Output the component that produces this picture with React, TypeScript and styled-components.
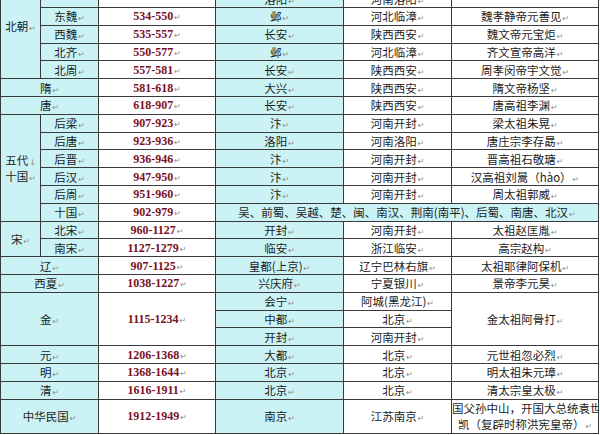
import React from "react";
import styled, { createGlobalStyle } from "styled-components";

const GlobalStyle = createGlobalStyle`
  html, body {
    margin: 0;
    padding: 0;
    background: #fff;
  }
  body {
    font-family: "Noto Sans CJK SC", "Liberation Sans", sans-serif;
  }
`;

type Tone = "sky" | "plain";

type Entry = {
  name: string;
  years: string;
  capital: React.ReactNode;
  place: React.ReactNode;
  founder: React.ReactNode;
};

const Viewport = styled.div`
  width: 600px;
  height: 435px;
  overflow: hidden;
`;

// the first row (北魏) sits above the top edge of the shot
const Table = styled.table`
  margin-top: -27px;
  width: 598px;
  border-collapse: collapse;
  table-layout: fixed;
  color: #1c1c1c;
  font-size: 11.5px;
  line-height: 14px;
`;

const Row = styled.tr<{ $h?: number }>`
  height: ${(p) => p.$h ?? 17.8}px;
`;

const Cell = styled.td<{ $tone?: Tone }>`
  border: 1px solid #3a3a3a;
  background: ${(p) => (p.$tone === "sky" ? "#cbf3f6" : "#ffffff")};
  text-align: center;
  vertical-align: middle;
  padding: 0 1px;
  white-space: nowrap;
  overflow: hidden;
  line-height: 14px;
`;

const Years = styled(Cell)`
  font-family: "Liberation Serif", serif;
  font-weight: bold;
  font-size: 12px;
  color: #7a1024;
`;

const Founder = styled(Cell)`
  padding: 0;
`;

const TwoLine = styled(Cell)`
  padding: 0;
  line-height: 16px;
`;

const Mark = styled.span`
  font-family: "DejaVu Sans", sans-serif;
  font-size: 8px;
  line-height: 0;
  font-weight: normal;
  color: #8c8c8c;
  margin-left: 1px;
`;

const Spell = styled.span`
  text-decoration: underline wavy #d23a3a;
  text-underline-offset: 2px;
`;

const t = (s: React.ReactNode, mark = "↵") => (
  <>
    {s}
    <Mark>{mark}</Mark>
  </>
);

const north: Entry[] = [
  { name: "东魏", years: "534-550", capital: "邺", place: "河北临漳", founder: "魏孝静帝元善见" },
  { name: "西魏", years: "535-557", capital: "长安", place: "陕西西安", founder: "魏文帝元宝炬" },
  { name: "北齐", years: "550-577", capital: "邺", place: "河北临漳", founder: "齐文宣帝高洋" },
  { name: "北周", years: "557-581", capital: "长安", place: "陕西西安", founder: "周孝闵帝宇文觉" },
];

const fiveDynasties: Entry[] = [
  { name: "后梁", years: "907-923", capital: "汴", place: "河南开封", founder: "梁太祖朱晃" },
  { name: "后唐", years: "923-936", capital: "洛阳", place: "河南洛阳", founder: "唐庄宗李存勗" },
  { name: "后晋", years: "936-946", capital: "汴", place: "河南开封", founder: "晋高祖石敬瑭" },
  {
    name: "后汉",
    years: "947-950",
    capital: "汴",
    place: "河南开封",
    founder: (
      <>
        汉高祖刘暠（<Spell>hào</Spell>）
      </>
    ),
  },
  { name: "后周", years: "951-960", capital: "汴", place: "河南开封", founder: "周太祖郭威" },
];

const song: Entry[] = [
  { name: "北宋", years: "960-1127", capital: "开封", place: "河南开封", founder: "太祖赵匡胤" },
  { name: "南宋", years: "1127-1279", capital: "临安", place: "浙江临安", founder: "高宗赵构" },
];

const singles1: Entry[] = [
  { name: "辽", years: "907-1125", capital: "皇都(上京)", place: "辽宁巴林右旗", founder: "太祖耶律阿保机" },
  { name: "西夏", years: "1038-1227", capital: "兴庆府", place: "宁夏银川", founder: "景帝李元昊" },
];

const singles2: Entry[] = [
  { name: "元", years: "1206-1368", capital: "大都", place: "北京", founder: "元世祖忽必烈" },
  { name: "明", years: "1368-1644", capital: "北京", place: "北京", founder: "明太祖朱元璋" },
  { name: "清", years: "1616-1911", capital: "北京", place: "北京", founder: "清太宗皇太极" },
];

const Tail = ({ e }: { e: Entry }) => (
  <>
    <Years>{t(e.years)}</Years>
    <Cell $tone="sky">{t(e.capital)}</Cell>
    <Cell>{t(e.place)}</Cell>
    <Founder>{t(e.founder)}</Founder>
  </>
);

const SingleRow = ({ e }: { e: Entry }) => (
  <Row>
    <Cell $tone="sky" colSpan={2}>
      {t(e.name)}
    </Cell>
    <Tail e={e} />
  </Row>
);

const App = () => {
  return (
    <>
      <GlobalStyle />
      <Viewport>
        <Table>
          <colgroup>
            <col style={{ width: 40 }} />
            <col style={{ width: 58 }} />
            <col style={{ width: 117 }} />
            <col style={{ width: 128 }} />
            <col style={{ width: 108 }} />
            <col style={{ width: 147 }} />
          </colgroup>
          <tbody>
            <Row $h={34}>
              <Cell $tone="sky" rowSpan={5}>
                {t("北朝")}
              </Cell>
              <Cell $tone="sky">{t("北魏")}</Cell>
              <Years>{t("386-534")}</Years>
              <TwoLine $tone="sky">
                {t("平城")}
                <br />
                {t("洛阳")}
              </TwoLine>
              <TwoLine>
                {t("山西大同")}
                <br />
                {t("河南洛阳")}
              </TwoLine>
              <Founder>{t("魏道武帝拓跋珪")}</Founder>
            </Row>
            {north.map((e) => (
              <Row key={e.name}>
                <Cell $tone="sky">{t(e.name)}</Cell>
                <Tail e={e} />
              </Row>
            ))}

            <SingleRow e={{ name: "隋", years: "581-618", capital: "大兴", place: "陕西西安", founder: "隋文帝杨坚" }} />
            <SingleRow e={{ name: "唐", years: "618-907", capital: "长安", place: "陕西西安", founder: "唐高祖李渊" }} />

            {fiveDynasties.map((e, i) => (
              <Row key={e.name}>
                {i === 0 && (
                  <TwoLine $tone="sky" rowSpan={6}>
                    {t("五代", "↓")}
                    <br />
                    {t("十国")}
                  </TwoLine>
                )}
                <Cell $tone="sky">{t(e.name)}</Cell>
                <Tail e={e} />
              </Row>
            ))}
            <Row>
              <Cell $tone="sky">{t("十国")}</Cell>
              <Years>{t("902-979")}</Years>
              <Cell $tone="sky" colSpan={3}>
                {t("吴、前蜀、吴越、楚、闽、南汉、荆南(南平)、后蜀、南唐、北汉")}
              </Cell>
            </Row>

            {song.map((e, i) => (
              <Row key={e.name}>
                {i === 0 && (
                  <Cell $tone="sky" rowSpan={2}>
                    {t("宋")}
                  </Cell>
                )}
                <Cell $tone="sky">{t(e.name)}</Cell>
                <Tail e={e} />
              </Row>
            ))}

            {singles1.map((e) => (
              <SingleRow key={e.name} e={e} />
            ))}

            <Row>
              <Cell $tone="sky" colSpan={2} rowSpan={3}>
                {t("金")}
              </Cell>
              <Years rowSpan={3}>{t("1115-1234")}</Years>
              <Cell $tone="sky">{t("会宁")}</Cell>
              <Cell>{t("阿城(黑龙江)")}</Cell>
              <Founder rowSpan={3}>{t("金太祖阿骨打")}</Founder>
            </Row>
            <Row>
              <Cell $tone="sky">{t("中都")}</Cell>
              <Cell>{t("北京")}</Cell>
            </Row>
            <Row>
              <Cell $tone="sky">{t("开封")}</Cell>
              <Cell>{t("河南开封")}</Cell>
            </Row>

            {singles2.map((e) => (
              <SingleRow key={e.name} e={e} />
            ))}

            <Row $h={34}>
              <Cell $tone="sky" colSpan={2}>
                {t("中华民国")}
              </Cell>
              <Years>{t("1912-1949")}</Years>
              <Cell $tone="sky">{t("南京")}</Cell>
              <Cell>{t("江苏南京")}</Cell>
              <TwoLine>
                国父孙中山，开国大总统袁世
                <br />
                {t("凯（复辟时称洪宪皇帝）")}
              </TwoLine>
            </Row>
          </tbody>
        </Table>
      </Viewport>
    </>
  );
};

export default App;
